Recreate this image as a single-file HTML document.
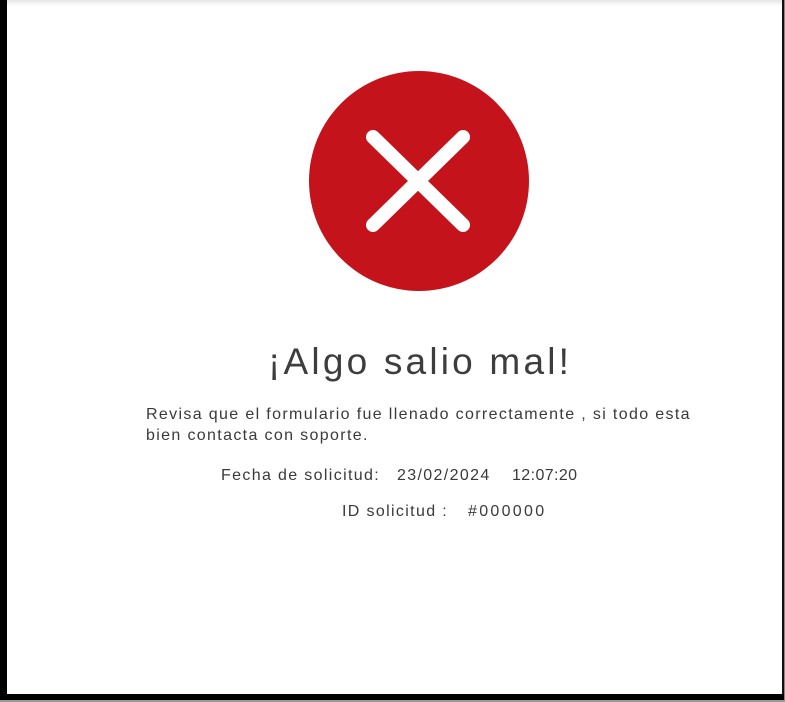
<!DOCTYPE html>
<html><head><meta charset="utf-8"><style>
html,body{margin:0;padding:0;width:785px;height:702px;overflow:hidden;background:#fff;font-family:"Liberation Sans",sans-serif;color:#3a3a3a}
.l{position:absolute;left:0;top:0;width:7px;height:700px;background:#000}
.r{position:absolute;left:782px;top:0;width:2px;height:700px;background:#111}
.rg{position:absolute;left:784px;top:0;width:1px;height:702px;background:#888}
.b{position:absolute;left:0;top:694px;width:784px;height:6px;background:#000}
.bg{position:absolute;left:0;top:700px;width:785px;height:2px;background:#999}
.t{position:absolute;left:7px;top:0;width:775px;height:6px;background:linear-gradient(#e6e6e6,#fff)}
.tx{position:absolute;white-space:nowrap;letter-spacing:1.35px}
</style></head><body>
<div class="t"></div><div class="l"></div><div class="r"></div><div class="rg"></div><div class="b"></div><div class="bg"></div>
<svg style="position:absolute;left:309px;top:71px" width="220" height="220"><circle cx="110" cy="110" r="110" fill="#c4131b"/><path d="M64 66L154 154M154 66L64 154" stroke="#fff" stroke-width="14" stroke-linecap="round"/></svg>
<div class="tx" style="left:268px;top:341px;font-size:37px;letter-spacing:3.2px;color:#3d3d3d">¡Algo salio mal!</div>
<div class="tx" style="left:146px;top:404px;font-size:16px;line-height:21px">Revisa que el formulario fue llenado correctamente , si todo esta<br>bien contacta con soporte.</div>
<div class="tx" style="left:221px;top:467px;font-size:16px">Fecha de solicitud:</div>
<div class="tx" style="left:397px;top:467px;font-size:16px">23/02/2024</div>
<div class="tx" style="left:512px;top:467px;font-size:16px;letter-spacing:0.4px">12:07:20</div>
<div class="tx" style="left:342px;top:503px;font-size:16px">ID solicitud :</div>
<div class="tx" style="left:468px;top:503px;font-size:16px;letter-spacing:2.3px">#000000</div>
</body></html>
